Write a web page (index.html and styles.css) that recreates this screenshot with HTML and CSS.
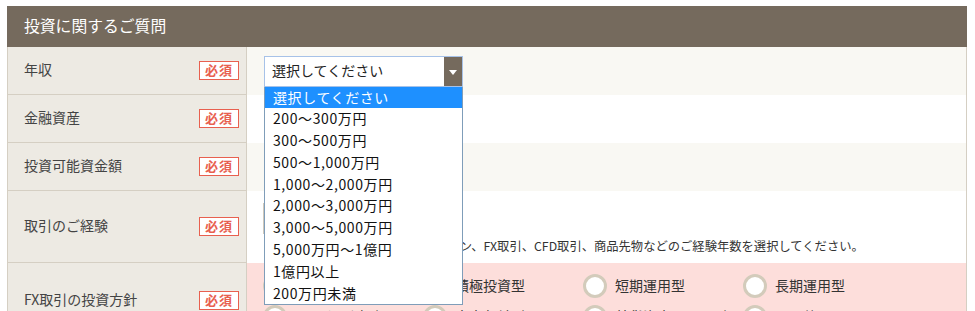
FILE: index.html
```html
<!DOCTYPE html>
<html lang="ja">
<head>
    <meta charset="UTF-8">
    <meta name="viewport" content="width=device-width, initial-scale=1.0">
    <title>投資に関するご質問</title>
    <link rel="stylesheet" href="styles.css">
</head>
<body>
    <div class="form">
        <h2 class="form_title">投資に関するご質問</h2>
        <div class="qa">
            <div class="row row_light">
                <div class="label"><span>年収</span><em class="must">必須</em></div>
                <div class="field">
                    <div class="select select_open">
                        <span class="select_text">選択してください</span>
                        <span class="select_arrow"></span>
                        <ul class="listbox">
                            <li class="active">選択してください</li>
                            <li>200～300万円</li>
                            <li>300～500万円</li>
                            <li>500～1,000万円</li>
                            <li>1,000～2,000万円</li>
                            <li>2,000～3,000万円</li>
                            <li>3,000～5,000万円</li>
                            <li>5,000万円～1億円</li>
                            <li>1億円以上</li>
                            <li>200万円未満</li>
                        </ul>
                    </div>
                </div>
            </div>
            <div class="row">
                <div class="label"><span>金融資産</span><em class="must">必須</em></div>
                <div class="field">
                    <div class="select"><span class="select_text">選択してください</span><span class="select_arrow"></span></div>
                </div>
            </div>
            <div class="row row_light">
                <div class="label"><span>投資可能資金額</span><em class="must">必須</em></div>
                <div class="field">
                    <div class="select"><span class="select_text">選択してください</span><span class="select_arrow"></span></div>
                </div>
            </div>
            <div class="row row_tall">
                <div class="label"><span>取引のご経験</span><em class="must">必須</em></div>
                <div class="field field_col">
                    <div class="select"><span class="select_text">選択してください</span><span class="select_arrow"></span></div>
                    <p class="note">※株式、投資信託、先物・オプション、FX取引、CFD取引、商品先物などのご経験年数を選択してください。</p>
                </div>
            </div>
            <div class="row row_pink">
                <div class="label"><span>FX取引の投資方針</span><em class="must">必須</em></div>
                <div class="field field_radio">
                    <div class="radios">
                        <label class="radio"><i></i><span>安定運用型</span></label>
                        <label class="radio"><i></i><span>積極投資型</span></label>
                        <label class="radio"><i></i><span>短期運用型</span></label>
                        <label class="radio"><i></i><span>長期運用型</span></label>
                        <label class="radio"><i></i><span>リスク回避型</span></label>
                        <label class="radio"><i></i><span>安定収益型</span></label>
                        <label class="radio"><i></i><span>外貨資産ヘッジ型</span></label>
                        <label class="radio"><i></i><span>その他</span></label>
                    </div>
                </div>
            </div>
        </div>
    </div>
</body>
</html>
```

FILE: styles.css
```css
* { margin: 0; padding: 0; box-sizing: border-box;}
body{ font-family: "Noto Sans CJK JP", "Liberation Sans", sans-serif; color: #333; background: #fff;}
.form{ width: 960px; margin: 6px 0 0 7px;}
.form_title{ height: 41px; background-color: #756a5d; color: #fff; font-size: 15.8px; font-weight: normal; line-height: 39px; padding-left: 17px;}
.qa{ border-left: 1px solid #d5cfc3; border-right: 1px solid #d5cfc3;}
.row{ display: flex; height: 48px; background: #fff;}
.row_light{ background: #f9f8f3;}
.row_tall{ height: 72px;}
.row_pink{ height: 76px; background: #fddedb;}
.label{ width: 239px; flex-shrink: 0; display: flex; align-items: center; justify-content: space-between; padding: 0 7px 0 16px; background: #edeae3; border-right: 1px solid #d5cfc3; border-bottom: 1px solid #d5cfc3; font-size: 14px; color: #444;}
.label span{ margin-bottom: 4px;}
.must{ font-style: normal; font-size: 13px; font-weight: bold; color: #e8604f; background: #fff; border: 1.5px solid #e8604f; width: 40px; height: 19px; line-height: 15px; text-align: center; letter-spacing: 1px;}
.field{ flex: 1; display: flex; align-items: center; padding-left: 17px;}
.field_col{ flex-direction: column; align-items: flex-start; justify-content: flex-start; padding-top: 12px; padding-left: 16px;}
.field_radio{ align-items: flex-start; padding-top: 11px; padding-left: 16px;}
.select{ position: relative; width: 199px; height: 31px; border: 1px solid #cfc8bb; background: #fff; display: flex; font-size: 14px; color: #222;}
.select_open{ border-color: #a7c2e8; z-index: 10;}
.select_text{ flex: 1; line-height: 27px; padding-left: 7px;}
.select_arrow{ width: 18px; background: #756a5d; position: relative;}
.select_arrow::after{ content: ""; position: absolute; left: 5px; top: 13px; border-left: 4px solid transparent; border-right: 4px solid transparent; border-top: 5px solid #fff;}
.listbox{ position: absolute; left: -1px; top: 30px; width: 199px; list-style: none; background: #fff; border: 1px solid #7f9db9; border-top: none;}
.listbox li{ height: 21.8px; line-height: 20px; padding-left: 8px; font-size: 14px; letter-spacing: 0.6px; color: #111; white-space: nowrap;}
.listbox li.active{ background: #1e90ff; color: #fff;}
.note{ font-size: 12.3px; margin-top: 3px; color: #333; white-space: nowrap;}
.radios{ display: grid; grid-template-columns: repeat(4, 160px); row-gap: 7px;}
.radio{ display: flex; align-items: center; height: 24px; font-size: 14px; color: #333;}
.radio span{ margin-bottom: 3px;}
.radio i{ width: 24px; height: 24px; border-radius: 50%; border: 3px solid #d3cbbb; background: #fff; margin-right: 8px; flex-shrink: 0;}
```
